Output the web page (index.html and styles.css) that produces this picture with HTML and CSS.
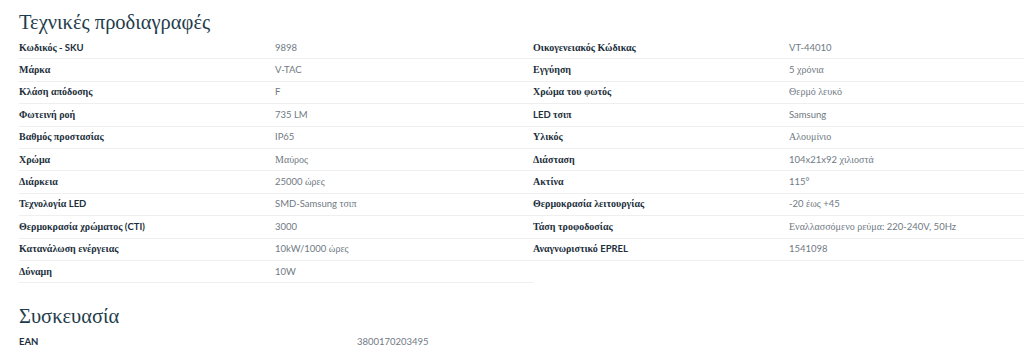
FILE: index.html
```html
<!DOCTYPE html>
<html lang="el">
<head>
<meta charset="utf-8">
<title>Τεχνικές προδιαγραφές</title>
<link rel="stylesheet" href="styles.css">
</head>
<body>
<div class="page">
  <h2 class="title">Τεχνικές προδιαγραφές</h2>
  <div class="specs">
    <div class="table">
      <div class="row"><span class="label"><span class="gr">Κωδικός</span> - SKU</span><span class="value">9898</span></div>
      <div class="row"><span class="label"><span class="gr">Μάρκα</span></span><span class="value">V-TAC</span></div>
      <div class="row"><span class="label"><span class="gr">Κλάση απόδοσης</span></span><span class="value">F</span></div>
      <div class="row"><span class="label"><span class="gr">Φωτεινή ροή</span></span><span class="value">735 LM</span></div>
      <div class="row"><span class="label"><span class="gr">Βαθμός προστασίας</span></span><span class="value">IP65</span></div>
      <div class="row"><span class="label"><span class="gr">Χρώμα</span></span><span class="value"><span class="gr">Μαύρος</span></span></div>
      <div class="row"><span class="label"><span class="gr">Διάρκεια</span></span><span class="value">25000 <span class="gr">ώρες</span></span></div>
      <div class="row"><span class="label"><span class="gr">Τεχνολογία</span> LED</span><span class="value">SMD-Samsung <span class="gr">τσιπ</span></span></div>
      <div class="row"><span class="label"><span class="gr">Θερμοκρασία χρώματος</span> (CTI)</span><span class="value">3000</span></div>
      <div class="row"><span class="label"><span class="gr">Κατανάλωση ενέργειας</span></span><span class="value">10kW/1000 <span class="gr">ώρες</span></span></div>
      <div class="row"><span class="label"><span class="gr">Δύναμη</span></span><span class="value">10W</span></div>
    </div>
    <div class="table">
      <div class="row"><span class="label"><span class="gr">Οικογενειακός Κώδικας</span></span><span class="value">VT-44010</span></div>
      <div class="row"><span class="label"><span class="gr">Εγγύηση</span></span><span class="value">5 <span class="gr">χρόνια</span></span></div>
      <div class="row"><span class="label"><span class="gr">Χρώμα του φωτός</span></span><span class="value"><span class="gr">Θερμό λευκό</span></span></div>
      <div class="row"><span class="label">LED <span class="gr">τσιπ</span></span><span class="value">Samsung</span></div>
      <div class="row"><span class="label"><span class="gr">Υλικός</span></span><span class="value"><span class="gr">Αλουμίνιο</span></span></div>
      <div class="row"><span class="label"><span class="gr">Διάσταση</span></span><span class="value">104x21x92 <span class="gr">χιλιοστά</span></span></div>
      <div class="row"><span class="label"><span class="gr">Ακτίνα</span></span><span class="value">115°</span></div>
      <div class="row"><span class="label"><span class="gr">Θερμοκρασία λειτουργίας</span></span><span class="value">-20 <span class="gr">έως</span> +45</span></div>
      <div class="row"><span class="label"><span class="gr">Τάση τροφοδοσίας</span></span><span class="value"><span class="gr">Εναλλασσόμενο ρεύμα</span>: 220-240V, 50Hz</span></div>
      <div class="row"><span class="label"><span class="gr">Αναγνωριστικό</span> EPREL</span><span class="value">1541098</span></div>
    </div>
  </div>
  <h2 class="title title-second">Συσκευασία</h2>
  <div class="table table-wide">
    <div class="row"><span class="label">EAN</span><span class="value">3800170203495</span></div>
  </div>
</div>
</body>
</html>
```

FILE: styles.css
```css
* { box-sizing: border-box; }
html, body { margin: 0; padding: 0; background: #ffffff; }
body {
  font-family: Lato, "Liberation Sans", sans-serif;
  overflow: hidden;
  width: 1024px;
  height: 350px;
}
.page {
  padding: 10px 0 0 19px;
}
.title {
  margin: 0 0 3px 0;
  font-family: "Liberation Serif", serif;
  font-weight: 400;
  font-size: 20.5px;
  line-height: 24px;
  color: #1f3d4c;
}
.title-second {
  margin-top: 21px;
}
.specs {
  display: grid;
  grid-template-columns: 514px 514px;
  width: 1028px;
}
.table {
  display: flex;
  flex-direction: column;
}
.table-wide .row {
  grid-template-columns: 338px 1fr;
  border-bottom: none;
}
.row {
  display: grid;
  grid-template-columns: 256px 1fr;
  align-items: center;
  height: 22.4px;
  border-bottom: 1px solid #efefef;
  font-size: 9.5px;
  line-height: 12px;
}
.label {
  font-weight: 700;
  color: #1c2f3c;
}
.value {
  color: #6f7a83;
}
.gr {
  font-family: "Liberation Serif", serif;
  font-size: 10px;
}
```
